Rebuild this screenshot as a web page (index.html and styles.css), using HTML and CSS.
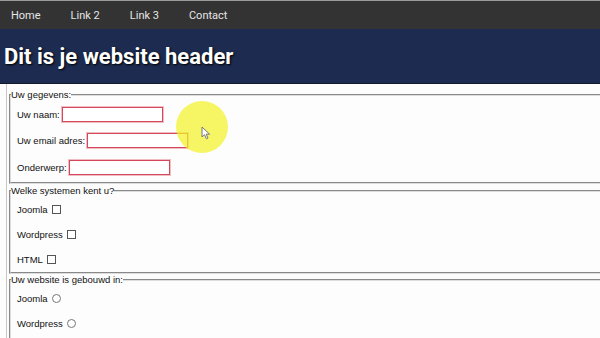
FILE: index.html
```html
<!DOCTYPE html>
<html lang="nl">
<head>
    <meta charset="UTF-8">
    <meta name="viewport" content="width=device-width, initial-scale=1.0">
    <title>Formulier</title>
    <link rel="stylesheet" href="styles.css">
</head>
<body>
    <nav class="top-nav">
        <a href="#">Home</a>
        <a href="#">Link 2</a>
        <a href="#">Link 3</a>
        <a href="#">Contact</a>
    </nav>
    <header class="site-header">
        <h1>Dit is je website header</h1>
    </header>
    <main class="content">
        <form>
            <fieldset class="details">
                <legend>Uw gegevens:</legend>
                <div class="row"><label>Uw naam:<input type="text" required></label></div>
                <div class="row"><label>Uw email adres:<input type="email" required></label></div>
                <div class="row"><label>Onderwerp:<input type="text" required></label></div>
            </fieldset>
            <fieldset class="choices">
                <legend>Welke systemen kent u?</legend>
                <div class="row"><label>Joomla <input type="checkbox"></label></div>
                <div class="row"><label>Wordpress <input type="checkbox"></label></div>
                <div class="row"><label>HTML <input type="checkbox"></label></div>
            </fieldset>
            <fieldset class="choices last">
                <legend>Uw website is gebouwd in:</legend>
                <div class="row"><label>Joomla <input type="radio" name="cms"></label></div>
                <div class="row"><label>Wordpress <input type="radio" name="cms"></label></div>
            </fieldset>
        </form>
    </main>

    <!-- cursor highlight from the screen recording -->
    <div class="cursor-spot">
        <svg class="cursor" width="10" height="14" viewBox="0 0 10 14">
            <path d="M1 1 L1 11 L3.5 8.7 L5.4 12.8 L7 12 L5.2 8.2 L8.6 8.2 Z" fill="#fff" stroke="#777" stroke-width="1"/>
        </svg>
    </div>
</body>
</html>
```

FILE: styles.css
```css
html, body{
    margin: 0;
    padding: 0;
}
body{
    font-family: "Liberation Sans", Arial, sans-serif;
    font-size: 9.5px;
    color: #111;
    background: #fdfdfd;
    overflow: hidden;
    height: 338px;
}

.top-nav{
    display: flex;
    gap: 30px;
    height: 28px;
    align-items: center;
    padding-left: 11px;
    background: #333;
    border-top: 1px solid #9a9a9a;
    font-family: Roboto, "Liberation Sans", sans-serif;
}
.top-nav a{
    color: #e6e6e6;
    text-decoration: none;
    font-size: 11px;
}

.site-header{
    display: flex;
    align-items: center;
    height: 54px;
    padding-left: 4px;
    background: #1c2b4f;
    border-bottom: 1px solid #111a30;
    font-family: Roboto, "Liberation Sans", sans-serif;
}
.site-header h1{
    margin: 0;
    font-size: 22px;
    font-weight: 700;
    color: #fff;
    text-shadow: 1px 1px 2px #000;
}

.content{
    margin-left: 6px;
    margin-right: -20px;
    padding: 5px 0 0 2px;
    border-left: 1px solid #c8c8c8;
    min-height: 260px;
}

fieldset{
    margin: 0;
    padding: 0;
    border: 2px groove #ddd;
}
legend{
    padding: 0;
    line-height: 12px;
}

.row{
    display: flex;
    align-items: center;
    height: 26.5px;
    padding-left: 6px;
}
.row label{
    display: flex;
    align-items: center;
}
.details{
    padding-bottom: 1px;
    margin-bottom: 1px;
}
.choices .row{
    height: 25px;
}
.last{
    padding-bottom: 20px;
}

input[type="text"],
input[type="email"]{
    width: 101px;
    height: 15px;
    box-sizing: border-box;
    margin: 0 0 0 2px;
    padding: 0 2px;
    border: 1px solid #d3485a;
    box-shadow: 0 0 0 1px rgba(224, 110, 125, .45);
    background: #fff;
}

input[type="checkbox"],
input[type="radio"]{
    appearance: none;
    width: 9px;
    height: 9px;
    margin: 0 0 0 4px;
    border: 1px solid #555;
    background: #fff;
}
input[type="radio"]{
    border-color: #777;
    border-radius: 50%;
}

.cursor-spot{
    position: absolute;
    left: 176px;
    top: 101px;
    width: 52px;
    height: 52px;
    border-radius: 50%;
    background: rgba(242, 242, 40, .72);
}
.cursor{
    position: absolute;
    left: 25px;
    top: 25px;
}
```
